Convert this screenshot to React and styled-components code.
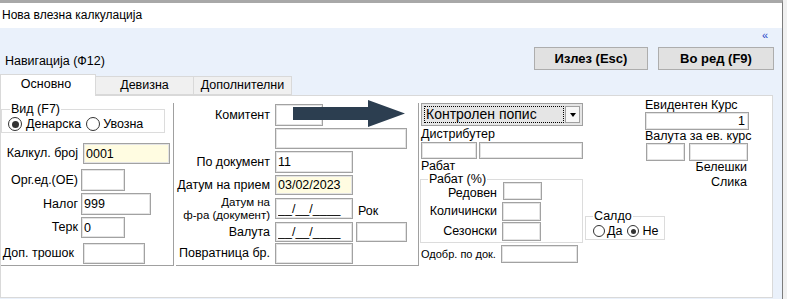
import React from "react";
import styled, { createGlobalStyle } from "styled-components";

const GlobalStyle = createGlobalStyle`
  html, body {
    margin: 0;
    padding: 0;
    background: #f0f0f0;
  }
  body {
    font-family: "Liberation Sans", Arial, sans-serif;
    font-size: 12.5px;
    color: #000;
  }
`;

const Window = styled.div`
  width: 783px;
  height: 299px;
  box-sizing: border-box;
  border-top: 3px solid #a8a8a8;
  border-right: 1px solid #7c7c7c;
  display: flex;
  flex-direction: column;
  overflow: hidden;
`;

const TitleBar = styled.div`
  height: 25px;
  line-height: 25px;
  background: #fff;
  padding-left: 2px;
  font-size: 12px;
`;

const Body = styled.div`
  flex: 1;
  background: #eaf1fb;
  display: flex;
  flex-direction: column;
`;

const Header = styled.div`
  height: 46px;
  display: flex;
  justify-content: space-between;
  align-items: flex-start;
`;

const NavLabel = styled.div`
  margin: 26px 0 0 5px;
  line-height: 15px;
`;

const Actions = styled.div`
  display: flex;
  flex-direction: column;
  align-items: flex-end;
  padding-right: 8px;
`;

const Collapse = styled.span`
  margin: 1px 6px 0 0;
  font-size: 11px;
  line-height: 12px;
  color: #1a3fc7;
  cursor: pointer;
`;

const ButtonRow = styled.div`
  display: flex;
  gap: 10px;
  margin-top: 6px;
`;

const Button = styled.button`
  width: ${p => p.$w}px;
  height: 23px;
  box-sizing: border-box;
  background: #e1e1e1;
  border: 1px solid #adadad;
  font-family: "Liberation Sans", Arial, sans-serif;
  font-weight: bold;
  font-size: 13px;
  color: #000;
  padding: 0;
`;

const TabBar = styled.div`
  height: 21px;
  display: flex;
  align-items: flex-end;
`;

const Tab = styled.div`
  box-sizing: border-box;
  width: ${p => p.$w}px;
  height: ${p => (p.$active ? 22 : 19)}px;
  margin-bottom: ${p => (p.$active ? -1 : 0)}px;
  position: relative;
  z-index: ${p => (p.$active ? 1 : 0)};
  background: ${p => (p.$active ? "#fff" : "#f0f0f0")};
  border: 1px solid #d9d9d9;
  border-bottom: ${p => (p.$active ? "none" : "1px solid #d9d9d9")};
  border-left: ${p => (p.$first ? "1px solid #d9d9d9" : "none")};
  text-align: center;
  line-height: ${p => (p.$active ? 18 : 17)}px;
  padding-right: ${p => (p.$active ? 4 : 0)}px;
`;

const Panel = styled.div`
  position: relative;
  width: 773px;
  height: 203px;
  box-sizing: border-box;
  background: #fff;
  border: 1px solid #d9d9d9;
  display: flex;
  align-items: flex-start;
`;

const Column = styled.div`
  box-sizing: border-box;
  width: ${p => p.$w}px;
  height: 163px;
  margin: 7px 0 0 ${p => p.$ml || 0}px;
  border-right: 1px solid #a0a0a0;
  border-bottom: 1px solid #a0a0a0;
  display: flex;
  flex-direction: column;
`;

const Group = styled.fieldset`
  box-sizing: border-box;
  width: ${p => p.$w}px;
  margin: ${p => p.$mt || 0}px 0 0 ${p => p.$ml || 0}px;
  padding: 0 0 1px 0;
  border: 1px solid #dcdcdc;
  min-width: 0;
`;

const Legend = styled.legend`
  padding: 0 1px;
  margin-left: ${p => p.$ml}px;
  line-height: ${p => p.$lh || 14}px;
`;

const RadioRow = styled.div`
  display: flex;
  align-items: center;
  gap: 5px;
  padding-left: ${p => p.$pl}px;
  margin-top: 1px;
  line-height: 14px;
`;

const RadioItem = styled.label`
  display: flex;
  align-items: center;
  gap: ${p => p.$gap}px;
`;

const Circle = styled.span`
  box-sizing: border-box;
  width: ${p => p.$size}px;
  height: ${p => p.$size}px;
  border: 1px solid #333;
  border-radius: 50%;
  background: #fff;
  display: flex;
  align-items: center;
  justify-content: center;
  &::after {
    content: "";
    display: ${p => (p.$checked ? "block" : "none")};
    width: ${p => p.$size - 7}px;
    height: ${p => p.$size - 7}px;
    border-radius: 50%;
    background: #333;
  }
`;

const Row = styled.div`
  display: flex;
  align-items: center;
  gap: ${p => p.$gap || 3}px;
  margin-top: ${p => p.$mt || 0}px;
`;

const Label = styled.span`
  width: ${p => p.$w}px;
  text-align: ${p => p.$align || "right"};
  line-height: ${p => p.$lh || 15}px;
  font-size: ${p => p.$fs || 12.5}px;
  white-space: nowrap;
  margin-top: ${p => p.$mt || 0}px;
`;

const Input = styled.input`
  box-sizing: border-box;
  width: ${p => p.$w}px;
  height: ${p => p.$h || 21}px;
  margin: 0 0 0 ${p => p.$ml || 0}px;
  padding: 0 ${p => (p.$right ? 3 : 2)}px 0 2px;
  border: 1px solid #a2a2a2;
  box-shadow: inset 0 0 0 1px #e4e4e4;
  background: ${p => (p.$yellow ? "#fffce1" : "#fff")};
  font-family: "Liberation Sans", Arial, sans-serif;
  font-size: 12.5px;
  color: #000;
  text-align: ${p => (p.$right ? "right" : "left")};
  outline: none;
`;

const RightArea = styled.div`
  flex: 1;
  display: flex;
  padding-left: 2px;
`;

const SubCol = styled.div`
  width: ${p => p.$w}px;
  margin-left: ${p => p.$ml || 0}px;
  display: flex;
  flex-direction: column;
`;

const Combo = styled.div`
  box-sizing: border-box;
  width: 162px;
  height: 23px;
  margin-top: 7px;
  padding: 0 2px;
  border: 1px solid #a0a0a0;
  background: #e5e5e5;
  display: flex;
  align-items: center;
  gap: 1px;
`;

const ComboText = styled.div`
  flex: 1;
  height: 17px;
  box-sizing: border-box;
  border: 1px dotted #000;
  font-size: 14px;
  line-height: 15px;
  padding-left: 1px;
`;

const DropButton = styled.div`
  box-sizing: border-box;
  width: 15px;
  height: 17px;
  border: 1px solid #a0a0a0;
  background: #f7f7f7;
  display: flex;
  align-items: center;
  justify-content: center;
  &::after {
    content: "";
    border-left: 3.5px solid transparent;
    border-right: 3.5px solid transparent;
    border-top: 4px solid #000;
  }
`;

const Info = styled.div`
  width: 104px;
  margin: 3px 0 0 60px;
  display: flex;
  flex-direction: column;
`;

const InfoLabel = styled.div`
  line-height: 13px;
  text-align: ${p => p.$align || "left"};
  padding-right: ${p => (p.$align === "right" ? 2 : 0)}px;
  margin-top: ${p => p.$mt || 0}px;
  white-space: nowrap;
`;

const Arrow = styled.svg`
  position: absolute;
  left: 292px;
  top: 4px;
`;

export default function App() {
  return (
    <>
      <GlobalStyle />
      <Window>
        <TitleBar>Нова влезна калкулација</TitleBar>
        <Body>
          <Header>
            <NavLabel>Навигација (Ф12)</NavLabel>
            <Actions>
              <Collapse>«</Collapse>
              <ButtonRow>
                <Button $w={114}>Излез (Esc)</Button>
                <Button $w={116}>Во ред (F9)</Button>
              </ButtonRow>
            </Actions>
          </Header>

          <TabBar>
            <Tab $w={96} $active $first>Основно</Tab>
            <Tab $w={98}>Девизна</Tab>
            <Tab $w={98}>Дополнителни</Tab>
          </TabBar>

          <Panel>
            <Column $w={173}>
              <Group $w={164} $mt={-1}>
                <Legend $ml={8}>Вид (F7)</Legend>
                <RadioRow $pl={6}>
                  <RadioItem $gap={4}>
                    <Circle $size={14} $checked />
                    Денарска
                  </RadioItem>
                  <RadioItem $gap={3}>
                    <Circle $size={14} />
                    Увозна
                  </RadioItem>
                </RadioRow>
              </Group>
              <Row $mt={10} $gap={5}>
                <Label $w={77}>Калкул. број</Label>
                <Input $w={87} $yellow readOnly value="0001" />
              </Row>
              <Row $mt={5}>
                <Label $w={77}>Орг.ед.(ОЕ)</Label>
                <Input $w={44} $h={22} readOnly value="" />
              </Row>
              <Row $mt={2}>
                <Label $w={77}>Налог</Label>
                <Input $w={70} $h={22} readOnly value="999" />
              </Row>
              <Row $mt={2}>
                <Label $w={77}>Терк</Label>
                <Input $w={44} readOnly value="0" />
              </Row>
              <Row $mt={5} $gap={9}>
                <Label $w={73}>Доп. трошок</Label>
                <Input $w={62} readOnly value="" />
              </Row>
            </Column>

            <Column $w={243} $ml={2}>
              <Row $mt={1} $gap={5}>
                <Label $w={94}>Комитент</Label>
                <Input $w={48} $h={22} readOnly value="" />
              </Row>
              <Row $mt={2} $gap={5}>
                <Label $w={94} />
                <Input $w={132} readOnly value="" />
              </Row>
              <Row $mt={2} $gap={5}>
                <Label $w={94}>По документ</Label>
                <Input $w={78} $h={22} readOnly value="11" />
              </Row>
              <Row $mt={2} $gap={5}>
                <Label $w={94}>Датум на прием</Label>
                <Input $w={78} $h={20} $yellow readOnly value="03/02/2023" />
              </Row>
              <Row $mt={1} $gap={5}>
                <Label $w={94} $lh={12.5} $fs={11.5}>
                  Датум на
                  <br />
                  ф-ра (документ)
                </Label>
                <Input $w={78} readOnly value="__/__/____" />
                <Label $w={30} $align="left" $mt={6}>
                  Рок
                </Label>
              </Row>
              <Row $mt={1} $gap={5}>
                <Label $w={94}>Валута</Label>
                <Input $w={78} $h={20} readOnly value="__/__/____" />
                <Input $w={51} $h={20} $ml={-2} readOnly value="" />
              </Row>
              <Row $mt={1} $gap={5}>
                <Label $w={94}>Повратница бр.</Label>
                <Input $w={78} readOnly value="" />
              </Row>
            </Column>

            <RightArea>
              <SubCol $w={162}>
                <Combo>
                  <ComboText>Контролен попис</ComboText>
                  <DropButton />
                </Combo>
                <Label $w={162} $align="left" $mt={1}>
                  Дистрибутер
                </Label>
                <Row $gap={2}>
                  <Input $w={56} $h={17} readOnly value="" />
                  <Input $w={104} $h={17} readOnly value="" />
                </Row>
                <Label $w={162} $align="left">
                  Рабат
                </Label>
                <Group $w={163} $ml={-1} $mt={-1}>
                  <Legend $ml={7} $lh={12}>
                    Рабат (%)
                  </Legend>
                  <Row $mt={-3} $gap={6}>
                    <Label $w={76} $lh={14} $mt={3}>
                      Редовен
                    </Label>
                    <Input $w={39} $h={18} readOnly value="" />
                  </Row>
                  <Row $mt={2} $gap={5}>
                    <Label $w={76}>Количински</Label>
                    <Input $w={39} $h={19} readOnly value="" />
                  </Row>
                  <Row $mt={1} $gap={5}>
                    <Label $w={76}>Сезонски</Label>
                    <Input $w={39} $h={19} readOnly value="" />
                  </Row>
                </Group>
                <Row $mt={2} $gap={5}>
                  <Label $w={75} $align="left" $fs={11}>
                    Одобр. по док.
                  </Label>
                  <Input $w={77} $h={18} readOnly value="" />
                </Row>
              </SubCol>

              <SubCol $w={165} $ml={2}>
                <Info>
                  <InfoLabel>Евидентен Курс</InfoLabel>
                  <Input $w={104} $h={18} $right readOnly value="1" />
                  <InfoLabel>Валута за ев. курс</InfoLabel>
                  <Row $gap={4}>
                    <Input $w={39} $h={18} $ml={1} readOnly value="" />
                    <Input $w={59} $h={18} readOnly value="" />
                  </Row>
                  <InfoLabel $align="right">Белешки</InfoLabel>
                  <InfoLabel $align="right" $mt={2}>
                    Слика
                  </InfoLabel>
                </Info>
                <Group $w={80} $mt={21}>
                  <Legend $ml={7} $lh={13}>
                    Салдо
                  </Legend>
                  <RadioRow $pl={7}>
                    <RadioItem $gap={2}>
                      <Circle $size={12} />
                      Да
                    </RadioItem>
                    <RadioItem $gap={3}>
                      <Circle $size={12} $checked />
                      Не
                    </RadioItem>
                  </RadioRow>
                </Group>
              </SubCol>
            </RightArea>

            <Arrow width="113" height="28" viewBox="0 0 113 28">
              <polygon
                points="0,7 75,7 75,0 112,13.5 75,27 75,20 0,20"
                fill="#2c3e50"
              />
            </Arrow>
          </Panel>
        </Body>
      </Window>
    </>
  );
}
